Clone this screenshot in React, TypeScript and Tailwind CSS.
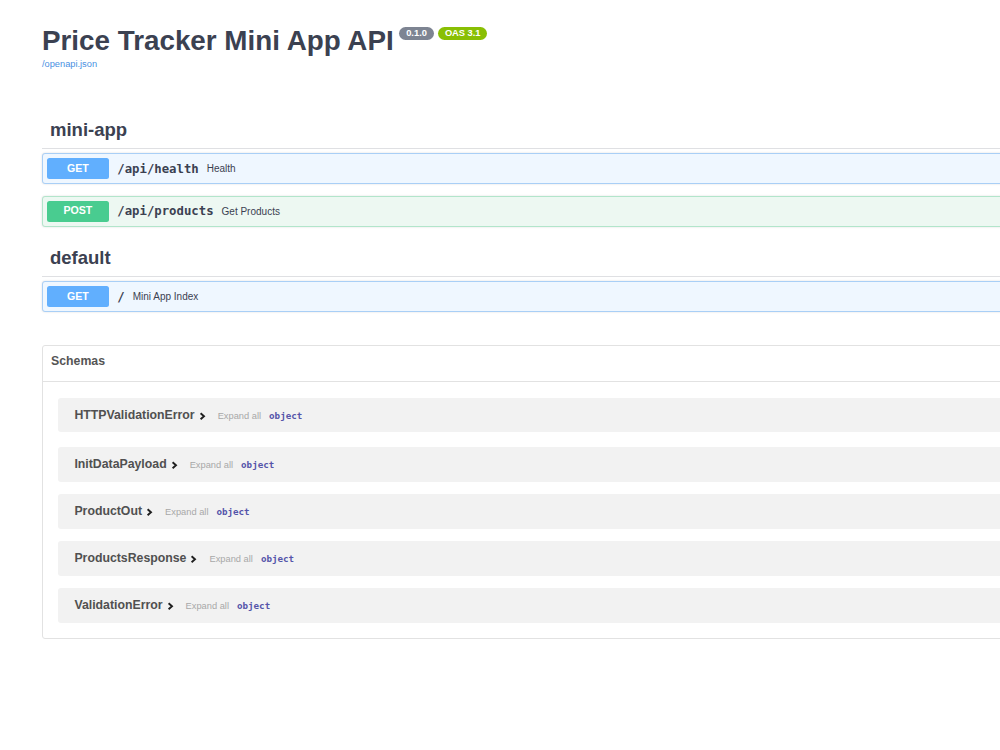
const sans = "font-['Liberation_Sans',Arial,sans-serif]";
const mono = "font-['DejaVu_Sans_Mono','Liberation_Mono',monospace]";

type Op = { method: "GET" | "POST"; path: string; summary: string };

const Opblock = ({ op, first }: { op: Op; first?: boolean }) => {
  const isGet = op.method === "GET";
  return (
    <div
      className={`${first ? "mt-[4px]" : "mt-[11.5px]"} flex h-[31px] items-center rounded-[3px] border px-[3.8px] shadow-[0_0_2px_rgba(0,0,0,0.15)] ${
        isGet ? "border-[#a9cff6] bg-[#eff7ff]" : "border-[#b2e5cb] bg-[#edf8f2]"
      }`}
    >
      <span
        className={`flex h-[21px] w-[62px] items-center justify-center rounded-[2.5px] text-[10.6px] font-bold text-white ${
          isGet ? "bg-[#61affe]" : "bg-[#49cc90]"
        }`}
      >
        {op.method}
      </span>
      <span className={`ml-[8.5px] ${mono} text-[12.3px] font-bold text-[#3b4151]`}>{op.path}</span>
      <span className="ml-[8px] text-[10px] text-[#3b4151]">{op.summary}</span>
    </div>
  );
};

const TagHeading = ({ name, top }: { name: string; top: string }) => (
  <h3 className={`${top} border-b border-[#dfe0e3] pb-[6.4px] pl-[8px] text-[18.5px] leading-[24px] font-bold text-[#3b4151]`}>
    {name}
  </h3>
);

const schemas = [
  { name: "HTTPValidationError", mt: "mt-[16px]", h: "h-[34px]" },
  { name: "InitDataPayload", mt: "mt-[15px]", h: "h-[35px]" },
  { name: "ProductOut", mt: "mt-[12px]", h: "h-[35px]" },
  { name: "ProductsResponse", mt: "mt-[12px]", h: "h-[35px]" },
  { name: "ValidationError", mt: "mt-[12px]", h: "h-[35px]" },
];

export default function App() {
  return (
    <div className={`h-[750px] w-[1000px] overflow-hidden bg-white ${sans}`}>
      <div className="ml-[42px] w-[1093px] pt-[27px]">
        {/* info */}
        <div className="flex items-start">
          <h2 className="text-[27.8px] leading-[28px] font-bold text-[#3b4151]">Price Tracker Mini App API</h2>
          <span className="ml-[5px] flex h-[13px] items-center rounded-full bg-[#7d8492] px-[7.5px] text-[9.3px] font-bold text-white">
            0.1.0
          </span>
          <span className="ml-[4px] flex h-[13px] items-center rounded-full bg-[#89bf04] px-[6.5px] text-[9.3px] font-bold text-white">
            OAS 3.1
          </span>
        </div>
        <a className="mt-[3px] block text-[9.25px] leading-[12px] text-[#4990e2]">/openapi.json</a>

        {/* tags */}
        <TagHeading name="mini-app" top="mt-[48px]" />
        <Opblock op={{ method: "GET", path: "/api/health", summary: "Health" }} first />
        <Opblock op={{ method: "POST", path: "/api/products", summary: "Get Products" }} />

        <TagHeading name="default" top="mt-[19px]" />
        <Opblock op={{ method: "GET", path: "/", summary: "Mini App Index" }} first />

        {/* schemas */}
        <section className="mt-[33px] rounded-[3px] border border-[#e2e2e2]">
          <h4 className="border-b border-[#e2e2e2] pt-[7px] pb-[12px] pl-[8px] text-[12.3px] leading-[16px] font-bold text-[#555]">
            Schemas
          </h4>
          <div className="px-[15.4px] pb-[15px]">
            {schemas.map((s) => (
              <div key={s.name} className={`${s.mt} ${s.h} flex items-baseline rounded-[3px] bg-[#f2f2f2] pt-[9px] pl-[16px]`}>
                <span className="text-[12.3px] leading-[16px] font-bold text-[#505050]">{s.name}</span>
                <svg className="relative top-[1px] ml-[4px]" width="7" height="8" viewBox="0 0 7 8" fill="none">
                  <path d="M1.6 1.2L5 4.2L1.6 7.2" stroke="#1f1f1f" strokeWidth="1.9" />
                </svg>
                <span className="ml-[12px] text-[9.3px] text-[#a8a8a8]">Expand all</span>
                <span className={`ml-[8px] ${mono} text-[9.2px] font-bold text-[#55a]`}>object</span>
              </div>
            ))}
          </div>
        </section>
      </div>
    </div>
  );
}
